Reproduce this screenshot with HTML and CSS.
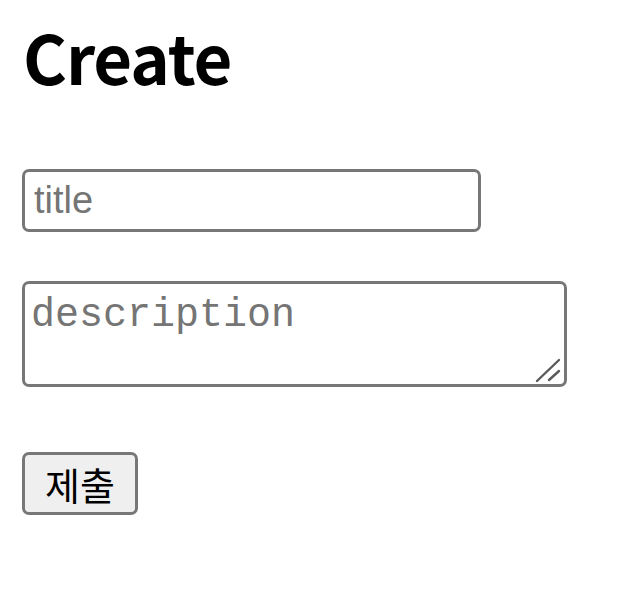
FILE: index.html
```html
<!DOCTYPE html>
<html lang="ko">
<head>
<meta charset="utf-8">
<title>Create</title>
<link rel="stylesheet" href="styles.css">
</head>
<body>
<h1 class="title">Create</h1>
<form class="form">
  <div class="row row-title">
    <input class="field-input" type="text" name="title" placeholder="title">
  </div>
  <div class="row row-desc">
    <div class="area-wrap">
      <textarea class="field-area" name="description" placeholder="description"></textarea>
      <svg class="resizer" width="30" height="30" viewBox="0 0 30 30" aria-hidden="true">
        <line x1="3" y1="26" x2="25" y2="5" stroke="#5a5a5a" stroke-width="2.4" stroke-linecap="round"/>
        <line x1="15" y1="25" x2="25" y2="16" stroke="#5a5a5a" stroke-width="2.4" stroke-linecap="round"/>
      </svg>
    </div>
  </div>
  <div class="row">
    <button class="submit" type="submit">제출</button>
  </div>
</form>
</body>
</html>
```

FILE: styles.css
```css
html, body {
  background: #ffffff;
}
body {
  margin: 0;
  padding: 0 0 0 22px;
}
.title {
  margin: 16px 0 0 0;
  font-family: "Noto Sans CJK KR", "Noto Sans", sans-serif;
  font-weight: 700;
  font-size: 67px;
  line-height: 80px;
  letter-spacing: -1px;
  color: #000;
  padding-left: 1px;
}
.form {
  display: flex;
  flex-direction: column;
  align-items: flex-start;
  margin-top: 73px;
}
.row-title {
  margin-bottom: 49px;
}
.row-desc {
  margin-bottom: 65px;
}
.field-input {
  box-sizing: border-box;
  width: 459px;
  height: 63px;
  margin: 0;
  padding: 0 8px 0 9px;
  border: 3px solid #777;
  border-radius: 7px;
  font-family: "Liberation Sans", Arial, sans-serif;
  font-size: 38px;
  color: #000;
  background: #fff;
  outline: none;
}
.field-input::placeholder {
  color: #757575;
}
.area-wrap {
  position: relative;
  display: block;
  width: 545px;
  height: 106px;
}
.field-area {
  box-sizing: border-box;
  display: block;
  width: 545px;
  height: 106px;
  margin: 0;
  padding: 9px 6px 0 6px;
  border: 3px solid #777;
  border-radius: 7px;
  font-family: "Liberation Mono", "Courier New", monospace;
  font-size: 40px;
  line-height: 45px;
  color: #000;
  background: #fff;
  resize: none;
  outline: none;
}
.field-area::placeholder {
  color: #757575;
}
.resizer {
  position: absolute;
  right: 3px;
  bottom: 2px;
}
.submit {
  box-sizing: border-box;
  width: 116px;
  height: 63px;
  margin: 0;
  padding: 0;
  border: 3px solid #777;
  border-radius: 7px;
  background: #efefef;
  font-family: "Noto Sans CJK KR", sans-serif;
  font-size: 38px;
  line-height: 1;
  color: #000;
}
```
